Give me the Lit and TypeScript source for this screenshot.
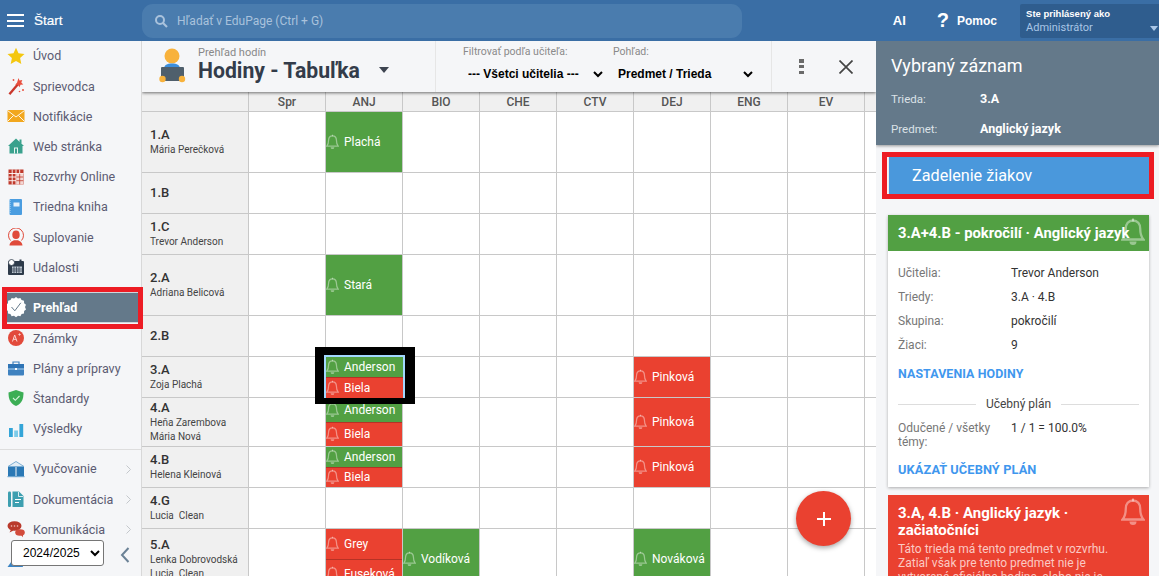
import { LitElement, html, css, svg } from "lit";
import { customElement } from "lit/decorators.js";

const bell = html`<svg class="bell" viewBox="0 0 24 28"><path d="M12 2.500c-4.600 0-7.200 3.400-7.200 8 0 5.800-.8 8.200-3.300 11h21c-2.500-2.800-3.300-5.200-3.300-11 0-4.600-2.600-8-7.200-8z" fill="none" stroke="currentColor" stroke-width="2.300"/><path d="M8.500 23.500a3.500 3.500 0 0 0 7 0z" fill="currentColor"/><rect x="11" y="0.500" width="2" height="3" fill="currentColor"/></svg>`;

const icons: Record<string, unknown> = {
  star: svg`<path d="M9 .8l2.500 5.500 6 .7-4.400 4.100 1.200 5.900L9 14.100 3.700 17l1.200-5.900L.5 7l6-.7z" fill="#f4c70f"/>`,
  wand: svg`<path d="M1.500 16.500L10 6.500l1.800 1.500-8.500 10z" fill="#c9372c"/><path d="M11.500 1l1 2.500 2.800-.5-1 2.600 2 1.900-2.800.2-1 2.600-1.500-2.300-2.800-.2 1.800-2z" fill="#e8503f"/><circle cx="16" cy="13" r="1" fill="#e8503f"/><circle cx="12.500" cy="14.500" r=".8" fill="#e8503f"/><circle cx="6.500" cy="3" r=".9" fill="#e8503f"/>`,
  mail: svg`<rect x="0.500" y="3" width="17" height="12" fill="#f2a71e"/><path d="M.5 3.500L9 10l8.500-6.500M.5 14.500L6.500 8.500M17.500 14.500L11.500 8.500" stroke="#fff" stroke-width=".9" fill="none"/>`,
  home: svg`<path d="M9 1.500L1 9h1.500v7.500h13V9H17z" fill="#3aa18d"/><rect x="12.500" y="2.500" width="2" height="4" fill="#3aa18d"/><rect x="7" y="10.500" width="4" height="6" fill="#eaf5f2"/><rect x="8" y="11.500" width="2" height="5" fill="#3aa18d"/>`,
  grid: svg`<rect x="1.500" y="1.500" width="15" height="15" fill="#c0392b"/><path d="M1.500 5.500h15M1.500 9h15M1.500 12.700h15M5.200 1.500v15M9 1.500v15M12.700 1.500v15" stroke="#fff" stroke-width=".9"/><rect x="9.300" y="5.800" width="7" height="10.700" fill="#f3d7d3"/><path d="M9.300 9h7.200M9.300 12.700h7.200M12.700 5.800v10.700" stroke="#c0392b" stroke-width=".8"/>`,
  book: svg`<rect x="2.500" y="1" width="12.500" height="16" rx="1" fill="#4a9de0"/><path d="M3 2v14" stroke="#a8d2f2" stroke-width="1.200" stroke-dasharray="1 1"/><rect x="6.500" y="4.500" width="6" height="4" fill="#e3f0fb"/>`,
  sub: svg`<ellipse cx="9" cy="6.800" rx="3.700" ry="4.300" fill="#e04a3a"/><path d="M2.500 17.500c.3-3.600 3-4.400 4.600-5.200h3.800c1.600.8 4.300 1.600 4.600 5.200z" fill="#e04a3a"/><path d="M3.500 12.500A7.500 7.500 0 1 1 14.500 12.500" fill="none" stroke="#e04a3a" stroke-width="1"/>`,
  cal: svg`<rect x="1" y="3" width="16" height="14" rx="1" fill="#2e3b4a"/><rect x="5" y="8.500" width="10" height="6.500" fill="#bcc6cf"/><path d="M7 8.500v6.500M9.500 8.500v6.500M12 8.500v6.500M5 11h10M5 13h10" stroke="#2e3b4a" stroke-width=".7"/><circle cx="4.500" cy="4.500" r="3" fill="#fff" stroke="#2e3b4a" stroke-width=".8"/><rect x="12.500" y="1.500" width="2" height="3" fill="#2e3b4a"/>`,
  check: svg`<path d="M10 .5l2 1.500 2.400-.6 1.200 2.200 2.400.6.100 2.500 1.900 1.600-1 2.300 1 2.300-1.900 1.600-.1 2.500-2.400.6-1.200 2.200-2.400-.6-2 1.500-2-1.500-2.400.6-1.200-2.200-2.400-.6-.1-2.500L.1 12.900l1-2.300-1-2.300L2 6.700l.1-2.500 2.400-.6 1.200-2.200 2.400.6z" fill="#fff"/><path d="M5.500 10.500l3.300 3.800 6-8" fill="none" stroke="#64798a" stroke-width="1"/>`,
  grade: svg`<circle cx="9" cy="9" r="8" fill="#e24a3b"/><path d="M5.500 12.500L7.700 6l2.300 6.500M6.300 10.300h2.900" fill="none" stroke="#fbd6d1" stroke-width="1"/><path d="M11.300 5.500h2.500M12.500 4.300v2.400" stroke="#fbd6d1" stroke-width=".8"/>`,
  case: svg`<rect x="1" y="5" width="16" height="11.500" rx="1" fill="#3f82c0"/><rect x="1" y="5" width="16" height="4.500" fill="#2f74b5"/><rect x="1" y="9.500" width="16" height="1" fill="#a9d0ee"/><path d="M6 5V3h6v2" fill="none" stroke="#3f82c0" stroke-width="1.200"/><rect x="8" y="9" width="2" height="2" fill="#fff"/>`,
  shield: svg`<path d="M9 1l7.500 2.500c0 6.500-1.500 11-7.500 13.500C3 14.500 1.500 10 1.500 3.500z" fill="#3cae55"/><path d="M6 9l2.300 2.300L12.500 7" fill="none" stroke="#d9f3de" stroke-width="1.100"/>`,
  bars: svg`<rect x="2" y="8" width="3.800" height="9" fill="#34a5d8"/><rect x="7.200" y="10.500" width="3.800" height="6.500" fill="#7dcbe9"/><rect x="12.400" y="4" width="3.800" height="13" fill="#34a5d8"/>`,
  open: svg`<path d="M9 1.500L1 6.500h16z" fill="#e2edf5" stroke="#6fa6cf" stroke-width=".9"/><path d="M1 7h7.500v9H1zM9.500 7H17v9H9.500z" fill="#2a78b5"/><rect x="0.500" y="16" width="17" height="1.200" fill="#6fa6cf"/>`,
  doc: svg`<rect x="1" y="1.500" width="3" height="15.500" rx="1.200" fill="#3d9fb0"/><path d="M5.500 1.500H12l4.500 4.500v11h-11z" fill="#3d9fb0"/><path d="M8 9.500h6M8 12.500h4" stroke="#fff" stroke-width="1"/><path d="M11.500 2v4.500H16" fill="none" stroke="#fff" stroke-width=".8"/>`,
  chat: svg`<ellipse cx="7.500" cy="6" rx="7" ry="4.800" fill="#b93a2c"/><path d="M4 9.500l-1.500 3 4-2" fill="#b93a2c"/><ellipse cx="13" cy="12.500" rx="4.800" ry="3.300" fill="#d24b3c"/><path d="M14 15l2 2.200v-3" fill="#d24b3c"/><circle cx="4.500" cy="6" r=".8" fill="#f3c5bf"/><circle cx="7.500" cy="6" r=".8" fill="#f3c5bf"/><circle cx="10.500" cy="6" r=".8" fill="#f3c5bf"/>`,
  tri: svg`<path d="M12 1L.5 17H16z" fill="#3b84c4"/>`,
};

const menuA: [string, string][] = [
  ["star", "Úvod"], ["wand", "Sprievodca"], ["mail", "Notifikácie"], ["home", "Web stránka"],
  ["grid", "Rozvrhy Online"], ["book", "Triedna kniha"], ["sub", "Suplovanie"], ["cal", "Udalosti"],
];
const menuB: [string, string][] = [["grade", "Známky"], ["case", "Plány a prípravy"], ["shield", "Štandardy"], ["bars", "Výsledky"]];
const menuC: [string, string][] = [["open", "Vyučovanie"], ["doc", "Dokumentácia"], ["chat", "Komunikácia"], ["tri", "Vzdelávanie"]];

const cols = ["Spr", "ANJ", "BIO", "CHE", "CTV", "DEJ", "ENG", "EV", ""];
type L = [string, "g" | "r"];
interface Row { name: string; t: string[]; h: number; cells?: Record<number, L[]>; }
const rows: Row[] = [
  { name: "1.A", t: ["Mária Perečková"], h: 61, cells: { 1: [["Plachá", "g"]] } },
  { name: "1.B", t: [], h: 41 },
  { name: "1.C", t: ["Trevor Anderson"], h: 41 },
  { name: "2.A", t: ["Adriana Belicová"], h: 61, cells: { 1: [["Stará", "g"]] } },
  { name: "2.B", t: [], h: 41 },
  { name: "3.A", t: ["Zoja Plachá"], h: 41, cells: { 1: [["Anderson", "g"], ["Biela", "r"]], 5: [["Pinková", "r"]] } },
  { name: "4.A", t: ["Heňa Zarembova", "Mária Nová"], h: 49, cells: { 1: [["Anderson", "g"], ["Biela", "r"]], 5: [["Pinková", "r"]] } },
  { name: "4.B", t: ["Helena Kleinová"], h: 41, cells: { 1: [["Anderson", "g"], ["Biela", "r"]], 5: [["Pinková", "r"]] } },
  { name: "4.G", t: ["Lucia  Clean"], h: 41 },
  { name: "5.A", t: ["Lenka Dobrovodská", "Lucia  Clean"], h: 61, cells: { 1: [["Grey", "r"], ["Fuseková", "r"]], 2: [["Vodíková", "g"]], 5: [["Nováková", "g"]] } },
];

@customElement("app-root")
export class AppRoot extends LitElement {
  static styles = css`
    :host { display: block; width: 1159px; height: 576px; overflow: hidden; position: relative; font-family: Roboto, "Liberation Sans", sans-serif; color: #333; background: #f5f6f8; }
    * { box-sizing: border-box; }
    .top { height: 41px; background: #3a6ea5; display: flex; align-items: center; color: #fff; }
    .burger { width: 17px; margin-left: 7px; height: 13px; display: flex; flex-direction: column; justify-content: space-between; }
    .burger i { display: block; height: 2px; background: #fff; }
    .start { width: 108px; padding-left: 10px; font: 13.500px "Liberation Sans", sans-serif; -webkit-text-stroke: .2px #fff; flex: none; margin-right: 10px; }
    .search { width: 600px; height: 34px; background: #4a7cae; border-radius: 11px; display: flex; align-items: center; padding-left: 12px; gap: 9px; color: #a9c2dc; font-size: 12px; }
    .search svg { width: 14px; height: 14px; }
    .ai { margin-left: 151px; font: bold 13px "Liberation Sans", sans-serif; }
    .q { margin-left: 31px; font: bold 20px "Liberation Sans", sans-serif; }
    .help { margin-left: 8px; font: bold 12px "Liberation Sans", sans-serif; }
    .user { margin-left: 23px; width: 139px; height: 34px; background: #2f5d8e; padding: 3px 0 0 6px; position: relative; border-radius: 2px 0 0 2px; font-size: 10px; line-height: 14px; }
    .user b { display: block; font-family: "Liberation Sans", sans-serif; font-weight: bold; font-size: 9.500px; }
    .user span { color: #a9c6e6; font-size: 11px; }
    .user::after { content: ""; position: absolute; right: 1px; top: 22px; border: 4px solid transparent; border-top: 5px solid #a9c6e6; border-bottom: 0; }
    .body { display: flex; height: 535px; }
    .side { width: 142px; flex: none; background: #f5f6f8; border-right: 1px solid #d8d8d8; position: relative; overflow: hidden; }
    .list { margin-top: -0.200px; }
    .item { height: 30.200px; display: flex; align-items: center; font-size: 12.500px; color: #5b5b72; position: relative; padding-left: 33px; }
    .item svg { position: absolute; left: 7px; top: 6px; width: 18px; height: 18px; }
    .item.act { height: 31px; background: #64798a; color: #fff; font-weight: bold; margin: 9.700px 0 0 7px; padding-left: 26px; border-top: 1px solid #cfd6db; border-bottom: 1px solid #cfd6db; }
    .item.act svg { left: -1px; top: 3px; width: 20px; height: 22px; }
    .rule { height: 1px; background: #ddd; margin: 5px 0 4px; }
    .item .chev { left: auto; right: 10px; top: 11px; width: 5px; height: 9px; }
    .year { position: absolute; left: 11px; top: 499px; width: 93px; height: 26px; font: 12px "Liberation Sans", sans-serif; background: #fff; color: #000; border: 1px solid #767676; border-radius: 3px; padding-left: 7px; }
    .coll { position: absolute; left: 119px; top: 505px; width: 12px; height: 18px; }
    .main { width: 734px; flex: none; display: flex; flex-direction: column; overflow: hidden; position: relative; }
    .head { height: 51px; flex: none; background: #f5f6f8; display: flex; box-shadow: 0 1px 3px rgba(0,0,0,.55); position: relative; z-index: 2; }
    .pic { width: 34px; height: 38px; margin: 6px 0 0 13px; flex: none; }
    .tt { margin-left: 9px; width: 237px; padding-top: 5px; flex: none; }
    .tt small { display: block; font-size: 11px; color: #888; line-height: 14px; }
    .tt strong { font-size: 21.200px; line-height: 22px; color: #333c4a; }
    .tt .caret { display: inline-block; margin-left: 19px; vertical-align: 5px; border: 5px solid transparent; border-top: 6px solid #3d4450; border-bottom: 0; }
    .filters { width: 337px; flex: none; border-left: 1px solid #e6e6e6; border-right: 1px solid #e6e6e6; display: flex; padding: 4px 0 0 28px; }
    .f { display: flex; flex-direction: column; }
    .f label { font-size: 10.500px; color: #8a8a8a; line-height: 14px; height: 19px; margin-left: -1px; }
    .f select { border: 0; background: transparent; font: bold 12px "Liberation Sans", Roboto, sans-serif; color: #000; padding: 0; outline: 0; height: 20px; }
    .f.a { width: 150px; } .f.a select { width: 142px; } .f.b select { width: 142px; }
    .tools { flex: 1; display: flex; align-items: center; padding-left: 27px; gap: 35px; }
    .dots { width: 5px; height: 15px; display: flex; flex-direction: column; justify-content: space-between; }
    .dots i { height: 3.500px; background: #6a6a6a; display: block; }
    .tools svg { width: 14px; height: 14px; }
    .tbl { display: grid; grid-template-columns: 107px repeat(8, 77px) 100px; grid-auto-rows: auto; background: #fff; }
    .hc { height: 20px; background: #f0f0f0; border-right: 1px solid #c8c8c8; border-bottom: 1px solid #c8c8c8; display: flex; align-items: center; justify-content: center; font-size: 12px; font-weight: 500; color: #555; }
    .rc { background: #f0f0f0; border-right: 1px solid #c8c8c8; border-bottom: 1px solid #c8c8c8; padding: 0 0 1px 8px; display: flex; flex-direction: column; justify-content: center; font-size: 10px; line-height: 14px; color: #444; white-space: pre; }
    .rc b { font-size: 13px; line-height: 17px; font-weight: 500; color: #333; }
    .c { border-right: 1px solid #c8c8c8; border-bottom: 1px solid #c8c8c8; display: flex; flex-direction: column; min-width: 0; }
    .les { flex: 1; display: flex; align-items: center; padding-left: 18px; color: #fff; font-size: 12px; position: relative; min-height: 0; }
    .les.g { background: #52a043; }
    .les.r { background: #ea4130; }
    .les + .les { border-top: 1px solid rgba(0,0,0,.22); }
    .bell { position: absolute; left: 0; top: 50%; margin-top: -8px; width: 13px; height: 16px; color: rgba(255,255,255,.42); }
    .sel { outline: 2px solid #a3d8ff; outline-offset: 0; position: relative; z-index: 1; border-right: 0; border-bottom: 0; }
    .sel .les { padding-bottom: 1px; }
    .fab { position: absolute; left: 654px; top: 450px; width: 55px; height: 55px; border-radius: 50%; background: #ea4130; box-shadow: 0 2px 5px rgba(0,0,0,.35); z-index: 3; display: flex; align-items: center; justify-content: center; }
    .fab svg { width: 16px; height: 16px; }
    .panel { flex: 1; background: #f5f6f8; display: flex; flex-direction: column; overflow: hidden; z-index: 4; }
    .ph { height: 104px; flex: none; background: #64798a; color: #fff; padding: 14px 15px 0; box-shadow: 0 1px 3px rgba(0,0,0,.4); }
    .ph h2 { margin: 0 0 16px; font-size: 18px; font-weight: 400; line-height: 21px; }
    .kv { display: flex; font-size: 11.500px; height: 30px; color: #dbe2e7; }
    .kv span { width: 89px; }
    .kv b { color: #fff; font-weight: 700; font-size: 12.500px; line-height: 14px; }
    .zad { margin: 12px 10px 0 12px; height: 37px; flex: none; background: #4a98dc; color: #fff; font-size: 16.200px; display: flex; align-items: center; padding-left: 23px; border-left: 1px solid #e8eef3; }
    .card { margin: 21px 10px 0 12px; background: #fff; box-shadow: 0 1px 3px rgba(0,0,0,.3); height: 272px; flex: none; font-size: 12px; }
    .ch { height: 36px; background: #52a043; color: #fff; font-size: 14.800px; font-weight: 700; display: flex; align-items: center; padding-left: 10px; position: relative; white-space: nowrap; }
    .bigbell { position: absolute; right: 4px; top: 3px; width: 24px; height: 28px; color: rgba(255,255,255,.42); }
    .bigbell .bell { position: static; margin: 0; width: 24px; height: 28px; display: block; }
    .cb { padding: 10px 10px 0; }
    .r { display: flex; height: 24px; align-items: center; }
    .r span { width: 113px; color: #777; flex: none; }
    .link { font-weight: 700; color: #3f97ee; letter-spacing: .1px; }
    .l1 { margin-top: 6px; height: 20px; display: flex; align-items: center; font-size: 12.400px; }
    .dv { margin-top: 11px; height: 20px; display: flex; align-items: center; gap: 10px; color: #444; }
    .dv i { flex: 1; height: 1px; background: #ddd; }
    .r2 { display: flex; margin-top: 7px; line-height: 14px; height: 28px; }
    .r2 span { width: 113px; color: #777; flex: none; }
    .l2 { margin-top: 10px; height: 20px; display: flex; align-items: center; font-size: 12.800px; }
    .red { margin: 8px 10px 0 12px; background: #ea4130; color: #fff; padding: 9px 10px; height: 120px; flex: none; position: relative; }
    .red h3 { margin: 1px 0 3px; font-size: 15px; line-height: 17px; font-weight: 700; padding-right: 12px; }
    .red p { margin: 0; font-size: 12px; line-height: 14px; color: #fbc9c3; }
    .mark { position: absolute; border: 5px solid #ed1c24; z-index: 9; pointer-events: none; }
    .m1 { left: 2px; top: 287px; width: 141px; height: 42px; }
    .m2 { left: 882px; top: 152px; width: 272px; height: 47px; }
    .mk { position: absolute; left: 315px; top: 347px; width: 100px; height: 57px; border: solid #000; border-width: 8px 10px 6px 9px; z-index: 9; pointer-events: none; }
  `;

  private item(m: [string, string], chev = false) {
    return html`<div class="item"><svg viewBox="0 0 18 18">${icons[m[0]]}</svg>${m[1]}${chev ? html`<svg class="chev" viewBox="0 0 5 9"><path d="M.5.5l4 4-4 4" fill="none" stroke="#c4c8cc"/></svg>` : ""}</div>`;
  }

  render() {
    return html`
      <div class="top">
        <div class="burger"><i></i><i></i><i></i></div>
        <div class="start">Štart</div>
        <div class="search">
          <svg viewBox="0 0 14 14"><circle cx="6" cy="6" r="4" fill="none" stroke="#a9c2dc" stroke-width="2"/><path d="M9 9l4 4" stroke="#a9c2dc" stroke-width="2.200"/></svg>
          Hľadať v EduPage (Ctrl + G)
        </div>
        <div class="ai">AI</div>
        <div class="q">?</div>
        <div class="help">Pomoc</div>
        <div class="user"><b>Ste prihlásený ako</b><span>Administrátor</span></div>
      </div>
      <div class="body">
        <div class="side">
          <div class="list">
            ${menuA.map((m) => this.item(m))}
            <div class="item act"><svg viewBox="0 0 20 21">${icons.check}</svg>Prehľad</div>
            ${menuB.map((m) => this.item(m))}
            <div class="rule"></div>
            ${menuC.map((m) => this.item(m, m[0] !== "tri"))}
          </div>
          <select class="year"><option>2024/2025</option></select>
          <svg class="coll" viewBox="0 0 12 18"><path d="M9.500 2L3 9l6.500 7" fill="none" stroke="#6b8296" stroke-width="2"/></svg>
        </div>
        <div class="main">
          <div class="head">
            <svg class="pic" viewBox="0 0 34 38">
              <circle cx="17" cy="9" r="7.500" fill="#f8b23c"/>
              <path d="M9 22c0-4 3-5.500 8-5.500s8 1.500 8 5.500z" fill="#3d8fdc"/>
              <rect x="6" y="20" width="23" height="14" rx="1" fill="#4f5f6c"/>
              <circle cx="7.500" cy="32" r="3.200" fill="#f8b23c"/><circle cx="27" cy="32" r="3.200" fill="#f8b23c"/>
            </svg>
            <div class="tt"><small>Prehľad hodín</small><strong>Hodiny - Tabuľka</strong><span class="caret"></span></div>
            <div class="filters">
              <div class="f a"><label>Filtrovať podľa učiteľa:</label><select><option>--- Všetci učitelia ---</option></select></div>
              <div class="f b"><label>Pohľad:</label><select><option>Predmet / Trieda</option></select></div>
            </div>
            <div class="tools">
              <div class="dots"><i></i><i></i><i></i></div>
              <svg viewBox="0 0 14 14"><path d="M.5.5l13 13M13.500.5l-13 13" stroke="#444" stroke-width="1.700"/></svg>
            </div>
          </div>
          <div class="tbl">
            <div class="hc"></div>
            ${cols.map((c) => html`<div class="hc">${c}</div>`)}
            ${rows.map((r, ri) => html`
              <div class="rc" style="height:${r.h}px"><b>${r.name}</b>${r.t.map((x) => html`<div>${x}</div>`)}</div>
              ${cols.map((_, i) => {
                const ls = r.cells?.[i];
                return html`<div class="c ${ri === 5 && i === 1 ? "sel" : ""}">
                  ${ls?.map((l) => html`<div class="les ${l[1]}">${bell}${l[0]}</div>`)}
                </div>`;
              })}
            `)}
          </div>
          <div class="fab"><svg viewBox="0 0 16 16"><path d="M8 1v14M1 8h14" stroke="#fff" stroke-width="2"/></svg></div>
        </div>
        <div class="panel">
          <div class="ph">
            <h2>Vybraný záznam</h2>
            <div class="kv"><span>Trieda:</span><b>3.A</b></div>
            <div class="kv"><span>Predmet:</span><b>Anglický jazyk</b></div>
          </div>
          <div class="zad">Zadelenie žiakov</div>
          <div class="card">
            <div class="ch">3.A+4.B - pokročilí · Anglický jazyk<span class="bigbell">${bell}</span></div>
            <div class="cb">
              <div class="r"><span>Učitelia:</span>Trevor Anderson</div>
              <div class="r"><span>Triedy:</span>3.A · 4.B</div>
              <div class="r"><span>Skupina:</span>pokročilí</div>
              <div class="r"><span>Žiaci:</span>9</div>
              <div class="l1 link">NASTAVENIA HODINY</div>
              <div class="dv"><i></i>Učebný plán<i></i></div>
              <div class="r2"><span>Odučené / všetky témy:</span>1 / 1 = 100.0%</div>
              <div class="l2 link">UKÁZAŤ UČEBNÝ PLÁN</div>
            </div>
          </div>
          <div class="red">
            <span class="bigbell">${bell}</span>
            <h3>3.A, 4.B · Anglický jazyk · začiatočníci</h3>
            <p>Táto trieda má tento predmet v rozvrhu. Zatiaľ však pre tento predmet nie je vytvorená oficiálna hodina, alebo nie je</p>
          </div>
        </div>
      </div>
      <div class="mark m1"></div>
      <div class="mark m2"></div>
      <div class="mk"></div>
    `;
  }
}
